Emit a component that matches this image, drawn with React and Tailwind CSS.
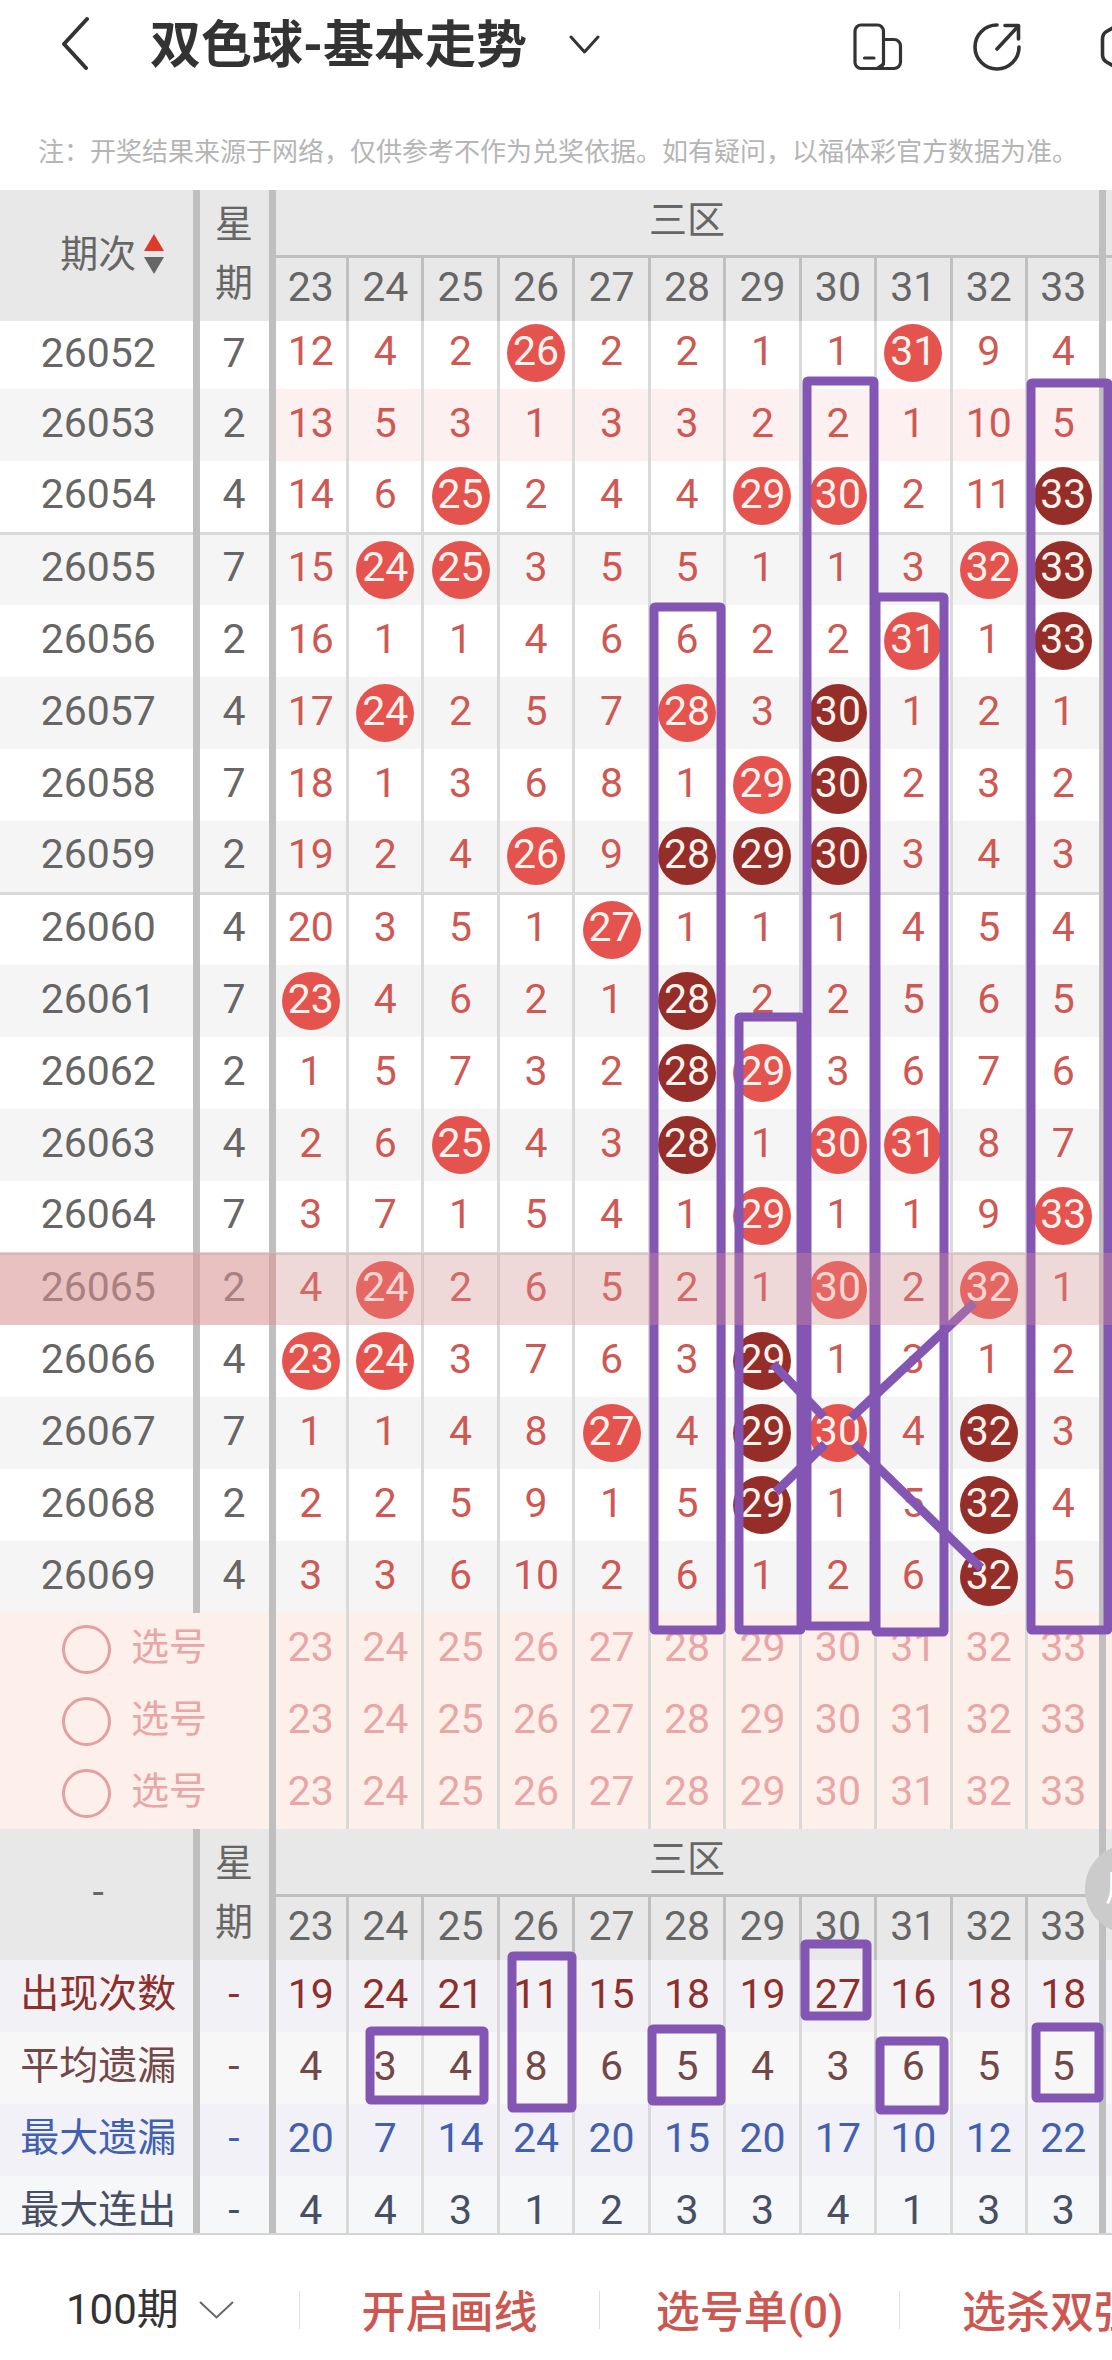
import React, { useState } from 'react';

const columns = [23, 24, 25, 26, 27, 28, 29, 30, 31, 32, 33];

// A value equal to its own column number is a drawn ball, anything else is the miss count
const draws = [
  { issue: '26052', week: 7, values: [12, 4, 2, 26, 2, 2, 1, 1, 31, 9, 4] },
  { issue: '26053', week: 2, values: [13, 5, 3, 1, 3, 3, 2, 2, 1, 10, 5] },
  { issue: '26054', week: 4, values: [14, 6, 25, 2, 4, 4, 29, 30, 2, 11, 33] },
  { issue: '26055', week: 7, values: [15, 24, 25, 3, 5, 5, 1, 1, 3, 32, 33] },
  { issue: '26056', week: 2, values: [16, 1, 1, 4, 6, 6, 2, 2, 31, 1, 33] },
  { issue: '26057', week: 4, values: [17, 24, 2, 5, 7, 28, 3, 30, 1, 2, 1] },
  { issue: '26058', week: 7, values: [18, 1, 3, 6, 8, 1, 29, 30, 2, 3, 2] },
  { issue: '26059', week: 2, values: [19, 2, 4, 26, 9, 28, 29, 30, 3, 4, 3] },
  { issue: '26060', week: 4, values: [20, 3, 5, 1, 27, 1, 1, 1, 4, 5, 4] },
  { issue: '26061', week: 7, values: [23, 4, 6, 2, 1, 28, 2, 2, 5, 6, 5] },
  { issue: '26062', week: 2, values: [1, 5, 7, 3, 2, 28, 29, 3, 6, 7, 6] },
  { issue: '26063', week: 4, values: [2, 6, 25, 4, 3, 28, 1, 30, 31, 8, 7] },
  { issue: '26064', week: 7, values: [3, 7, 1, 5, 4, 1, 29, 1, 1, 9, 33] },
  { issue: '26065', week: 2, values: [4, 24, 2, 6, 5, 2, 1, 30, 2, 32, 1] },
  { issue: '26066', week: 4, values: [23, 24, 3, 7, 6, 3, 29, 1, 3, 1, 2] },
  { issue: '26067', week: 7, values: [1, 1, 4, 8, 27, 4, 29, 30, 4, 32, 3] },
  { issue: '26068', week: 2, values: [2, 2, 5, 9, 1, 5, 29, 1, 5, 32, 4] },
  { issue: '26069', week: 4, values: [3, 3, 6, 10, 2, 6, 1, 2, 6, 32, 5] },
];

const stats = [
  { label: '出现次数', values: [19, 24, 21, 11, 15, 18, 19, 27, 16, 18, 18], className: 'bg-[#f2f2f6] text-[#8f2f2c]' },
  { label: '平均遗漏', values: [4, 3, 4, 8, 6, 5, 4, 3, 6, 5, 5], className: 'bg-[#f7f7f7] text-[#724848]' },
  { label: '最大遗漏', values: [20, 7, 14, 24, 20, 15, 20, 17, 10, 12, 22], className: 'bg-[#f1f1f7] text-[#4160b0]' },
  { label: '最大连出', values: [4, 4, 3, 1, 2, 3, 3, 4, 1, 3, 3], className: 'bg-[#f6f7f8] text-[#464f63]' },
];

const frames = [
  { x: 654, y: 417, w: 67, h: 1023 },
  { x: 739, y: 827, w: 62, h: 613 },
  { x: 807, y: 191, w: 67, h: 1245 },
  { x: 876, y: 407, w: 68, h: 1035 },
  { x: 1031, y: 193, w: 77, h: 1247 },
  { x: 370, y: 1841, w: 114, h: 69 },
  { x: 512, y: 1766, w: 60, h: 152 },
  { x: 652, y: 1839, w: 69, h: 72 },
  { x: 805, y: 1754, w: 62, h: 72 },
  { x: 880, y: 1851, w: 64, h: 69 },
  { x: 1036, y: 1837, w: 63, h: 71 },
];

const isBall = (row, col) => Boolean(draws[row]) && draws[row].values[col] === columns[col];

// Three or more balls in a line, down or across, are shown in the dark colour
const isStreak = (row, col) => {
  let down = 1;
  for (let r = row - 1; isBall(r, col); r--) down++;
  for (let r = row + 1; isBall(r, col); r++) down++;
  let across = 1;
  for (let c = col - 1; c >= 0 && isBall(row, c); c--) across++;
  for (let c = col + 1; c < columns.length && isBall(row, c); c++) across++;
  return down >= 3 || across >= 3;
};

const thickRight = 'border-r-[7px] border-r-[#bfbfbf]';
const thinRight = 'border-r-[3px] border-r-[#d9d9d9]';
const headRight = 'border-r-[3px] border-r-[#bfbfbf]';

const HeadRows = ({ first }) => (
  <>
    <tr className="h-[66px] bg-[#e8e8e8] text-[#666]">
      <th rowSpan={2} className={`p-0 pb-1 pl-1 font-normal ${thickRight}`}>{first}</th>
      <th rowSpan={2} className={`p-0 pb-1 font-normal text-[38px] leading-[59px] ${thickRight}`}>
        <span className="block">星</span>
        <span className="block">期</span>
      </th>
      <th colSpan={11} className={`p-0 pb-1 font-normal text-[38px] leading-none border-b-[3px] border-b-[#bfbfbf] ${thickRight}`}>三区</th>
      <td className="p-0 border-b-[3px] border-b-[#bfbfbf]" />
    </tr>
    <tr className="h-[65px] bg-[#e8e8e8] text-[#666]">
      {columns.map((n) => (
        <th key={n} className={`p-0 pb-1 font-normal ${n === 33 ? thickRight : headRight}`}>{n}</th>
      ))}
      <td className="p-0" />
    </tr>
  </>
);

const Header = () => (
  <header className="flex h-[86px] items-center overflow-hidden pl-[60px] text-[#333]">
    <button type="button" aria-label="返回" className="shrink-0">
      <svg width="30" height="54" viewBox="0 0 30 54" fill="none" stroke="currentColor" strokeWidth="4" strokeLinecap="round" strokeLinejoin="round">
        <path d="M27 3 L4 28 L26 52" />
      </svg>
    </button>
    <h1 className="ml-[60px] whitespace-nowrap pt-1 text-[51px] font-bold leading-none">双色球-基本走势</h1>
    <button type="button" aria-label="切换走势" className="ml-[42px] shrink-0 pt-1">
      <svg width="31" height="20" viewBox="0 0 31 20" fill="none" stroke="currentColor" strokeWidth="3" strokeLinecap="round" strokeLinejoin="round">
        <path d="M2 2 L15.500 17 L29 2" />
      </svg>
    </button>
    <div className="ml-auto -mr-[31px] flex shrink-0 items-center gap-[70px] pt-2">
      <button type="button" aria-label="横屏">
        <svg width="50" height="50" viewBox="0 0 50 50" fill="none" stroke="currentColor" strokeWidth="3.200" strokeLinecap="round" strokeLinejoin="round">
          <rect x="2" y="3" width="28.500" height="43.500" rx="6" />
          <path d="M31 17.500 H41 a6.500 6.500 0 0 1 6.500 6.500 V40 a6.500 6.500 0 0 1 -6.500 6.500 H24 L30.500 42" />
          <path d="M11.500 36 H21" />
        </svg>
      </button>
      <button type="button" aria-label="分享">
        <svg width="50" height="50" viewBox="0 0 50 50" fill="none" stroke="currentColor" strokeWidth="3.600" strokeLinecap="round" strokeLinejoin="round">
          <path d="M24 3 A22 22 0 1 0 46 25" />
          <path d="M32 3.500 H45.500 V17" />
          <path d="M44.500 5 L24 27" />
        </svg>
      </button>
      <button type="button" aria-label="设置">
        <svg width="50" height="50" viewBox="0 0 50 50" fill="none" stroke="currentColor" strokeWidth="3.600" strokeLinejoin="round">
          <path d="M9.500 17 q0 -5 4 -7.500 L24 3.500 q3 -1.500 6 0 L44 11 V39 L30 46 q-3 1.500 -6 0 L13.500 40 q-4 -2.500 -4 -7.500 Z" />
        </svg>
      </button>
    </div>
  </header>
);

// Hand-drawn frames and lines on top of the chart
const Drawing = () => (
  <svg className="pointer-events-none absolute inset-0 h-full w-full" viewBox="0 0 1112 2043" preserveAspectRatio="none" fill="none" stroke="#8456b4" strokeWidth="9" strokeLinejoin="round" aria-hidden="true">
    {frames.map((f) => (
      <rect key={`${f.x}-${f.y}`} x={f.x} y={f.y} width={f.w} height={f.h} rx="1" />
    ))}
    <path d="M974 1113 L851 1228 M773 1174 L824 1227 M825 1254 L776 1302 M854 1254 L981 1378" />
  </svg>
);

const App = () => {
  const [picked, setPicked] = useState([false, false, false]);

  const togglePick = (index) => {
    setPicked(picked.map((p, i) => (i === index ? !p : p)));
  };

  return (
    <div className="min-h-screen w-full overflow-x-hidden bg-white font-['Roboto','Noto_Sans_CJK_SC',sans-serif]">
      <Header />
      <p className="flex h-26 items-end whitespace-nowrap pb-[18px] pl-[38px] text-[26px] leading-10 text-[#b5b5b5]">
        注：开奖结果来源于网络，仅供参考不作为兑奖依据。如有疑问，以福体彩官方数据为准。
      </p>

      <main className="relative overflow-hidden border-b-2 border-[#d4d4d4]">
        <table className="w-full table-fixed border-collapse text-center text-[41px] leading-none">
          <colgroup>
            <col className="w-[196px]" />
            <col className="w-[76px]" />
            {columns.map((n) => <col key={n} />)}
            <col className="w-[10px]" />
          </colgroup>
          <thead>
            <HeadRows
              first={
                <button type="button" className="flex w-full items-center justify-center gap-2 pl-7 text-[38px] leading-none">
                  期次
                  <svg width="20" height="40" viewBox="0 0 20 40">
                    <path d="M10 0 L20 17 H0 Z" fill="#dd3b2a" />
                    <path d="M10 40 L20 23 H0 Z" fill="#666" />
                  </svg>
                </button>
              }
            />
          </thead>
          <tbody>
            {draws.map((draw, row) => {
              const marked = draw.issue === '26065';
              const stripe = row % 2 ? 'bg-[#f5f5f5]' : 'bg-white';
              const line = row % 5 === 2 && row < draws.length - 1 ? 'border-b-[3px] border-b-[#d9d9d9]' : '';
              return (
                <tr key={draw.issue} className={`relative ${row === 0 ? 'h-[68px]' : 'h-[72px]'} ${stripe}`}>
                  <td className={`p-0 pb-1 pl-1 text-[#666] ${thickRight} ${line}`}>
                    {draw.issue}
                    {marked && (
                      <>
                        <span className="absolute inset-y-0 left-0 z-10 w-[276px] bg-[#df9595]/55" />
                        <span className="absolute inset-y-0 left-[276px] right-0 z-10 bg-[#e19494]/30" />
                      </>
                    )}
                  </td>
                  <td className={`p-0 pb-1 text-[#666] ${thickRight} ${line}`}>{draw.week}</td>
                  {draw.values.map((value, col) => (
                    <td
                      key={columns[col]}
                      className={`p-0 text-[#cf5853] ${row === 0 ? 'pb-1' : ''} ${col === 10 ? thickRight : thinRight} ${line} ${row === 1 ? 'bg-[#fdf0f0]' : ''}`}
                    >
                      {isBall(row, col) ? (
                        <span className={`mx-auto flex size-[58px] items-center justify-center rounded-full pb-1 text-[#fff3ee] ${isStreak(row, col) ? 'bg-[#952d29]' : 'bg-[#e5534f]'}`}>
                          {value}
                        </span>
                      ) : (
                        <span className="block pb-1">{value}</span>
                      )}
                    </td>
                  ))}
                  <td className={`p-0 ${line}`} />
                </tr>
              );
            })}
            {picked.map((checked, index) => (
              <tr key={index} className="h-[72px] bg-[#fdf0ea] text-[#e9a6a7]">
                <td colSpan={2} className={`p-0 ${thickRight}`}>
                  <label className="flex items-center gap-5 pl-[62px] text-[38px]">
                    <input
                      type="checkbox"
                      checked={checked}
                      onChange={() => togglePick(index)}
                      className="size-[49px] appearance-none rounded-full border-[3px] border-[#e3a0a4] checked:bg-[#e5534f]"
                    />
                    <span className="pb-1">选号</span>
                  </label>
                </td>
                {columns.map((n) => (
                  <td key={n} className={`p-0 ${n === 33 ? thickRight : thinRight}`}>
                    <button type="button" className="w-full pb-1">{n}</button>
                  </td>
                ))}
                <td className="p-0" />
              </tr>
            ))}
            <HeadRows first="-" />
            {stats.map((stat, index) => (
              <tr key={stat.label} className={`${index === 3 ? 'h-[57px]' : 'h-[72px]'} ${stat.className}`}>
                <th className={`pb-0 pl-1 pr-0 pt-3 align-top text-[39px] font-normal leading-[45px] ${thickRight}`}>{stat.label}</th>
                <td className={`px-0 pb-0 pt-3 align-top leading-[45px] ${thickRight}`}>-</td>
                {stat.values.map((value, col) => (
                  <td key={columns[col]} className={`px-0 pb-0 pt-3 align-top leading-[45px] ${col === 10 ? thickRight : thinRight}`}>{value}</td>
                ))}
                <td className="p-0" />
              </tr>
            ))}
          </tbody>
        </table>
        <Drawing />
        <button type="button" className="absolute -right-[63px] bottom-[299px] flex size-[90px] items-center rounded-full bg-[#cbcbcb] pl-5 text-[36px] leading-none text-white">
          周
        </button>
      </main>

      <nav className="flex h-[125px] items-center overflow-hidden pt-6">
        <div className="relative flex h-[38px] w-[300px] shrink-0 items-center border-r border-[#ddd]">
          <select aria-label="期数" defaultValue="100" className="w-full appearance-none bg-transparent pl-[66px] text-[42px] leading-[56px] text-[#333] outline-none">
            <option value="50">50期</option>
            <option value="100">100期</option>
          </select>
          <svg className="pointer-events-none absolute right-[65px]" width="35" height="18" viewBox="0 0 35 18" fill="none" stroke="#666" strokeWidth="2">
            <path d="M1 1 L17.500 16.500 L34 1" />
          </svg>
        </div>
        <button type="button" className="h-[38px] w-[300px] shrink-0 border-r border-[#ddd] text-[44px] font-medium leading-none text-[#cd5650]">开启画线</button>
        <button type="button" className="h-[38px] w-[300px] shrink-0 border-r border-[#ddd] text-[44px] font-medium leading-none text-[#cd5650]">选号单(0)</button>
        <button type="button" className="h-[38px] w-[300px] shrink-0 text-[44px] font-medium leading-none text-[#cd5650]">选杀双强</button>
      </nav>
    </div>
  );
};

export default App;
